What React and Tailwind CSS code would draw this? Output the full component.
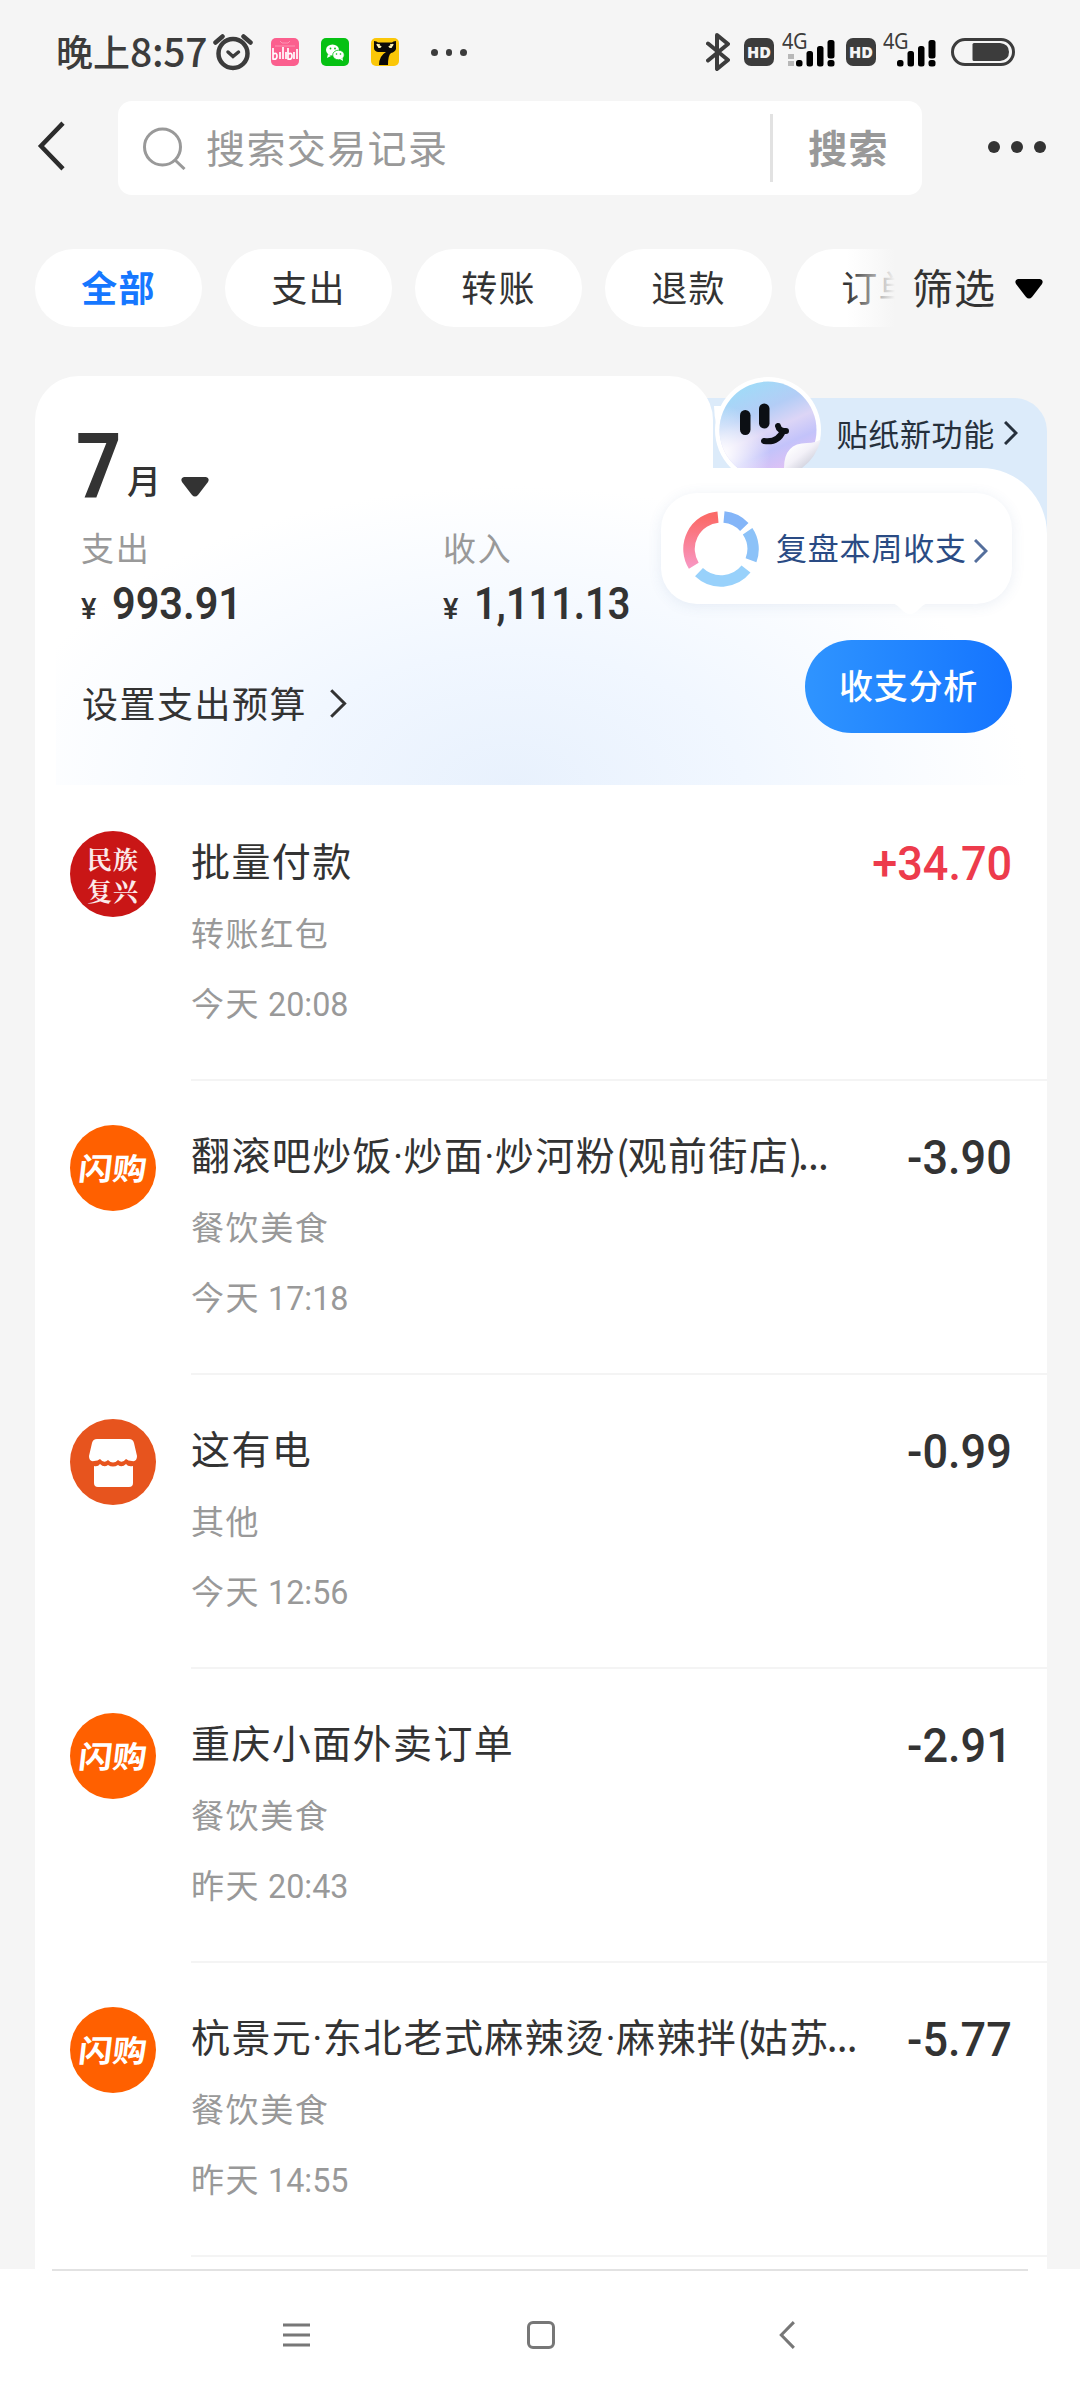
const CJK = "font-['Noto_Sans_CJK_SC',sans-serif]"

function Chevron({ className, flip, w = 2.5, color = 'currentColor' }) {
  return (
    <svg className={className} viewBox="0 0 14 24" preserveAspectRatio="none" fill="none" stroke={color} strokeWidth={w}>
      <path d={flip ? 'M13 1 2 12 13 23' : 'M1 1 12 12 1 23'} vectorEffect="non-scaling-stroke" />
    </svg>
  )
}

function Caret({ className }) {
  return (
    <svg className={className} viewBox="0 0 28 20" fill="currentColor">
      <path d="M3 0h22q4 1 2 5L17 18q-3 3-6 0L1 5Q-1 1 3 0Z" />
    </svg>
  )
}

// Condensed numerals: Roboto squeezed horizontally
function Num({ children, className = '' }) {
  return <span className={`inline-block origin-left font-['Roboto',sans-serif] ${className}`}>{children}</span>
}

function HdBadge() {
  return (
    <span className="flex h-7 w-[30px] items-center justify-center rounded-[7px] bg-[#3c3c3c] font-['Open_Sans',sans-serif] text-[16px] font-extrabold leading-none text-[#f5f5f5]">
      HD
    </span>
  )
}

function Signal({ dual }) {
  return (
    <div className="relative h-10 w-[54px]">
      <span className="absolute left-0 top-[-6px] origin-left scale-x-[0.95] font-['Noto_Sans',sans-serif] text-[21px] leading-[30px] tracking-[-0.5px]">
        4G
      </span>
      <svg className="h-10 w-[54px]" viewBox="0 0 54 40">
        {dual && <path d="M6 22h6v5H6zM6 29h6v5H6z" fill="#b8b8b8" />}
        <g fill="#000">
          <rect x="14" y="28" width="6.5" height="6.5" rx="2.5" />
          <rect x="24.5" y="19" width="6.5" height="15.5" rx="2.5" />
          <rect x="35" y="14" width="6.5" height="20.5" rx="2.5" />
          <rect x="45.5" y="8" width="7" height="18.5" rx="2.5" />
          <rect x="45.5" y="28" width="7" height="6.5" rx="2.5" />
        </g>
      </svg>
    </div>
  )
}

function StatusBar() {
  return (
    <div className="flex h-[101px] items-start pt-8 text-[#3c3c3c]">
      <div className={`ml-14 h-10 w-[157px] whitespace-nowrap text-[37px] font-medium leading-[37px] ${CJK}`}>
        晚上<span className="text-[39px] tracking-[-0.3px]">8:57</span>
      </div>
      <svg className="h-10 w-10" viewBox="0 0 40 40" fill="none" stroke="#3c3c3c" strokeLinecap="round">
        <circle cx="20" cy="21.5" r="14.5" strokeWidth="4.5" />
        <path d="M2.5 10.5 9.5 4.5M37.5 10.5 30.5 4.5" strokeWidth="4.5" />
        <path d="m15 20 5 4.5 5.5-4.5" strokeWidth="3.5" />
      </svg>
      <svg className="ml-[18px] mt-1.5 size-7" viewBox="0 0 28 28">
        <rect width="28" height="28" rx="5" fill="#fb5f8e" />
        <path d="m9 3 2 2h6l2-2M4 8h20" stroke="#fd94b3" fill="none" />
        <path d="M2 10v11q4 1 4-3t-4-2M9 14v7M12 9v12M15 14v7M17 10v11q4 1 4-3t-4-2M23 14v7M26 11v10" fill="none" stroke="#fff" strokeWidth="1.7" />
      </svg>
      <svg className="ml-[22px] mt-1.5 size-7" viewBox="0 0 28 28">
        <rect width="28" height="28" rx="5" fill="#06c113" />
        <ellipse cx="11.5" cy="12" rx="6.5" ry="5.5" fill="#fff" />
        <path d="m7 16-1 4 4-2z" fill="#fff" />
        <ellipse cx="17.5" cy="17" rx="5.8" ry="4.8" fill="#fff" stroke="#06c113" strokeWidth=".8" />
        <path d="m19 21 3 2-.5-3z" fill="#fff" />
        <g fill="#06c113">
          <circle cx="9.5" cy="10.5" r=".9" />
          <circle cx="14" cy="10.5" r=".9" />
          <circle cx="15.5" cy="16" r=".8" />
          <circle cx="19.5" cy="16" r=".8" />
        </g>
      </svg>
      <svg className="ml-[22px] mt-1.5 size-7" viewBox="0 0 28 28">
        <rect width="28" height="28" rx="5" fill="#fbc708" />
        <path d="M3 3q3 0 4 1.5h14Q22 3 25 3v8q-1 3-5 4-3 2-3 12H8q0-9 7-13H7q-4-1-4-4Z" fill="#0c0a08" />
        <path d="M6 6q2 5 4 2M18 8q2 3 4-2M8 6v4M20 6v4" fill="none" stroke="#fff3b0" strokeWidth="1.6" />
      </svg>
      <div className="ml-8 mt-[17px] flex gap-2">
        <i className="size-[6.5px] rounded-full bg-[#3c3c3c]" />
        <i className="size-[6.5px] rounded-full bg-[#3c3c3c]" />
        <i className="size-[6.5px] rounded-full bg-[#3c3c3c]" />
      </div>
      <div className="ml-auto mr-[65px] flex items-start">
        <svg className="mr-[14px] h-10 w-6" viewBox="0 0 24 40" fill="none" stroke="#3c3c3c" strokeWidth="4" strokeLinejoin="round" strokeLinecap="round">
          <path d="M2 11.5 22 28 11 37V3l11 9L2 28.5" />
        </svg>
        <div className="pt-1.5">
          <HdBadge />
        </div>
        <div className="ml-2 w-[64px]">
          <Signal dual />
        </div>
        <div className="pt-1.5">
          <HdBadge />
        </div>
        <div className="ml-[7px] w-[68px]">
          <Signal />
        </div>
        <svg className="mt-1.5 h-7 w-16" viewBox="0 0 64 28">
          <rect x="1.5" y="1.5" width="61" height="25" rx="12.5" fill="none" stroke="#3c3c3c" strokeWidth="3" />
          <path d="M23 5h26q9 1 9 9t-9 9H23q-1.5 0-1.5-1.5v-15Q21.500 5 23 5Z" fill="#3c3c3c" />
        </svg>
      </div>
    </div>
  )
}

function SearchHeader() {
  return (
    <div className="flex h-[94px] items-center">
      <Chevron flip className="mb-[5px] ml-[37px] h-[50px] w-7" w={4.5} color="#2c2c2c" />
      <div className="ml-[53px] flex h-[94px] w-[804px] items-center rounded-[14px] bg-white">
        <svg className="ml-[25px] h-[43px] w-[43px]" viewBox="0 0 43 43" fill="none" stroke="#999" strokeWidth="3">
          <circle cx="19.5" cy="20" r="18" />
          <path d="m32 33 9.5 9" />
        </svg>
        <span className="mb-[3px] ml-5 text-[39px] tracking-[1.4px] text-[#999]">搜索交易记录</span>
        <i className="ml-auto h-[68px] w-[3px] bg-[#e2e2e2]" />
        <span className="mb-[3px] ml-[35px] mr-[33px] text-[39px] font-bold tracking-[1.4px] text-[#999]">搜索</span>
      </div>
      <div className="mb-[3px] ml-[66px] flex gap-[11px]">
        <i className="size-3 rounded-full bg-[#333]" />
        <i className="size-3 rounded-full bg-[#333]" />
        <i className="size-3 rounded-full bg-[#333]" />
      </div>
    </div>
  )
}

const filters = ['全部', '支出', '转账', '退款', '订单']

function FilterTabs() {
  return (
    <div className="mt-[54px] flex h-[78px] items-center pl-[35px]">
      {/* the last chip scrolls out under the fade */}
      <div className="relative flex h-full w-[860px] gap-[23px] overflow-hidden">
        {filters.map((f, i) => (
          <button
            key={f}
            type="button"
            className={`h-full w-[167px] shrink-0 rounded-full bg-white pb-[5px] text-[36px] tracking-[1.3px] ${
              i === 0 ? 'font-bold text-[#1677ff]' : 'text-[#333]'
            }`}
          >
            {f}
          </button>
        ))}
        <span className="absolute inset-y-0 right-0 w-[48px] bg-linear-to-r from-transparent to-[#f5f5f5]" />
      </div>
      <span className="mb-[3px] ml-[17px] whitespace-nowrap text-[41px] tracking-[1px] text-[#333]">筛选</span>
      <Caret className="ml-[19px] mt-0.5 h-5 w-7 text-black" />
    </div>
  )
}

function Sticker() {
  return (
    <svg className="absolute left-[679px] top-0 h-[92px] w-[110px]" viewBox="0 0 110 92">
      <defs>
        <linearGradient id="holo" x1=".3" y1="0" x2=".75" y2="1">
          <stop offset="0" stopColor="#9fdcf8" />
          <stop offset=".3" stopColor="#b3cdf6" />
          <stop offset=".5" stopColor="#dcd5f6" />
          <stop offset=".68" stopColor="#c3c3fa" />
          <stop offset="1" stopColor="#eec0f2" />
        </linearGradient>
        <radialGradient id="glow" cx=".02" cy=".75" r=".5">
          <stop offset="0" stopColor="#fff" />
          <stop offset="1" stopColor="#fff" stopOpacity="0" />
        </radialGradient>
        <linearGradient id="curl" x1=".2" y1=".2" x2=".8" y2=".8">
          <stop offset="0" stopColor="#fff" />
          <stop offset=".5" stopColor="#f3f1f8" />
          <stop offset="1" stopColor="#cfd0dc" />
        </linearGradient>
      </defs>
      <path d="M0 30q1 40 30 62h25l30-20V30Z" fill="#fff" />
      <circle cx="54" cy="54" r="53" fill="#fff" />
      <circle cx="54" cy="54" r="48.5" fill="url(#holo)" />
      <circle cx="54" cy="54" r="48.5" fill="url(#glow)" />
      <path d="M70 92q0-25 23-25 9 0 14-4-2 17-17 29Z" fill="url(#curl)" />
      <path d="M107 63q3 0 3 2v27H88q14-10 19-29Z" fill="#dcebfa" />
      <rect x="26" y="34" width="10.5" height="25" rx="5.2" fill="#0c0f14" />
      <rect x="45" y="27.5" width="10.5" height="25" rx="5.2" fill="#0c0f14" />
      <path d="M50 65q14 2 19-10M64 50q1 5 8 5" fill="none" stroke="#0c0f14" strokeWidth="6" strokeLinecap="round" />
    </svg>
  )
}

function Donut() {
  return (
    <svg className="h-[76px] w-[76px]" viewBox="-38 -38 76 76" fill="none" strokeWidth="11.5">
      <defs>
        <linearGradient id="red" x1="0" y1="0" x2="0" y2="1">
          <stop offset="0" stopColor="#fb6a68" />
          <stop offset="1" stopColor="#f896c0" />
        </linearGradient>
      </defs>
      <path d="M-3-31.900A32 32 0 0 0-27.200 16.800" stroke="url(#red)" />
      <path d="M3-31.900A32 32 0 0 1 23.300-22" stroke="#84b5f8" />
      <path d="M26.600-17.800A32 32 0 0 1 30 11.300" stroke="#8cc2f8" />
      <path d="M-22 23.200A32 32 0 0 0 25 20" stroke="#98d1fb" />
    </svg>
  )
}

function Stat({ label, children, className }) {
  return (
    <div className={className}>
      <div className="text-[33px] leading-[38px] tracking-[1.8px] text-[#999]">{label}</div>
      <div className="mt-[14px] flex items-baseline leading-[48px] text-[#333]">
        <Num className="w-[31px] text-[29px] font-medium">¥</Num>
        {children}
      </div>
    </div>
  )
}

function Summary() {
  return (
    <section className="relative h-[411px]">
      {/* promo tab sits behind the white panel */}
      <div className="absolute right-0 top-[22px] h-[150px] w-[360px] rounded-tr-[33px] bg-[#dcebfa]" />
      <div className="absolute left-0 top-0 h-[93px] w-[678px] rounded-t-[44px] bg-white" />
      <div className="absolute bottom-0 left-0 top-[92px] w-full rounded-tr-[66px] bg-white" />
      <Sticker />
      <div className="absolute bottom-[2px] left-[21px] right-0 top-[110px] bg-[radial-gradient(ellipse_52%_100%_at_46%_100%,#e8f1fd_0%,#f1f7ff_45%,rgba(255,255,255,0)_100%)]" />

      <div className="relative flex justify-between">
        <div className="flex h-[126px] items-end pl-[41px] text-[#333]">
          <Num className="mb-[-3px] w-[50px] scale-x-[0.88] text-[90px] font-bold leading-[75px]">7</Num>
          <span className="ml-px text-[34px] font-medium leading-[44px]">月</span>
          <Caret className="mb-[5px] ml-5 h-5 w-7" />
        </div>
        <div className="mt-[33px] flex h-12 items-center pr-[29px] text-[#26303c]">
          <span className="text-[31px] tracking-[0.7px]">贴纸新功能</span>
          <Chevron className="ml-[9px] h-6 w-[14px]" w={3} />
        </div>
      </div>

      <div className="relative mt-[26px] flex pl-[46px]">
        <Stat label="支出" className="w-[362px]">
          <Num className="scale-x-[0.92] text-[45px] font-semibold">993.91</Num>
        </Stat>
        <Stat label="收入">
          <Num className="scale-x-[0.88] text-[45px] font-semibold">1,111.13</Num>
        </Stat>
      </div>
      <div className="relative mt-[45px] flex items-center pl-[47px] text-[#333]">
        <span className="text-[36px] leading-[48px] tracking-[1.5px]">设置支出预算</span>
        <Chevron className="ml-[23px] mt-0.5 h-[29px] w-[17px]" w={3} />
      </div>

      <div className="absolute right-[35px] top-[117px] flex h-[111px] w-[351px] items-center rounded-[36px] bg-white pl-[22px] text-[#2a4b84] shadow-[0_2px_14px_rgba(60,100,160,0.1)]">
        <Donut />
        <span className="mb-0.5 ml-[17px] whitespace-nowrap text-[31px] tracking-[0.8px]">复盘本周收支</span>
        <Chevron className="ml-[7px] mt-1 h-6 w-[14px] opacity-80" w={3} />
        <svg className="absolute bottom-[-11px] left-[231px] h-3 w-9" viewBox="0 0 36 12" fill="#fff">
          <path d="M0 0h36q-4 1-8 5-10 12-20 0-4-4-8-5Z" />
        </svg>
      </div>
      <button
        type="button"
        className="absolute right-[35px] top-[264px] h-[93px] w-[207px] rounded-full bg-linear-to-r from-[#2f94ff] to-[#1574ff] pb-[5px] text-[34px] font-medium tracking-[0.7px] text-white"
      >
        收支分析
      </button>
    </section>
  )
}

function Avatar({ kind }) {
  if (kind === 'red') {
    return (
      <div className="flex size-[86px] items-center justify-center rounded-full bg-[#c91616] pb-px font-['Noto_Serif_CJK_SC','Noto_Sans_CJK_SC',serif] text-[25px] font-bold leading-[32px] tracking-[1px] text-[#fbeaea]">
        <span className="w-[54px] text-center">民族复兴</span>
      </div>
    )
  }
  if (kind === 'shop') {
    return (
      <svg className="size-[86px]" viewBox="0 0 86 86">
        <circle cx="43" cy="43" r="43" fill="#e7541e" />
        <path
          d="M27 20h32q4 0 5 4l3 13q0 6-5 5-4 0-6-2-4 5-8 1-5 5-10 0-4 4-8-1-2 2-6 2-5 1-5-5l3-13q1-4 5-4Z"
          fill="#fff"
        />
        <path d="M24 47q4 1 6-2 4 4 8 1 5 3 10 0 4 3 8-1 2 3 7 2v17q0 4-4 4H28q-4 0-4-4Z" fill="#fff" />
      </svg>
    )
  }
  return (
    <div className="flex size-[86px] items-center justify-center rounded-full bg-[#ff6000] pb-0.5">
      <span className="-skew-x-6 scale-y-90 whitespace-nowrap text-[34px] font-bold leading-[40px] text-white">闪购</span>
    </div>
  )
}

const records = [
  { icon: 'red', title: '批量付款', type: '转账红包', day: '今天', time: '20:08', amount: '+34.70' },
  { icon: 'sg', title: '翻滚吧炒饭·炒面·炒河粉(观前街店)...', type: '餐饮美食', day: '今天', time: '17:18', amount: '-3.90' },
  { icon: 'shop', title: '这有电', type: '其他', day: '今天', time: '12:56', amount: '-0.99' },
  { icon: 'sg', title: '重庆小面外卖订单', type: '餐饮美食', day: '昨天', time: '20:43', amount: '-2.91' },
  { icon: 'sg', title: '杭景元·东北老式麻辣烫·麻辣拌(姑苏...', type: '餐饮美食', day: '昨天', time: '14:55', amount: '-5.77' },
]

// The CJK font draws the middle dot full width, so dots get a narrow face of their own
function Title({ text }) {
  return text.split(/(·|\.\.\.|[()])/).map((part, i) => {
    if (part === '·') {
      return (
        <span key={i} className="inline-block w-[10.5px] font-['Roboto',sans-serif] leading-none tracking-normal">
          ·
        </span>
      )
    }
    if (part === '...') {
      return (
        <span key={i} className="ml-[-3px] tracking-[-0.8px]">
          ...
        </span>
      )
    }
    if (part === '(' || part === ')') {
      return (
        <span key={i} className="tracking-[-1.5px]">
          {part}
        </span>
      )
    }
    return part
  })
}

function RecordRow({ record }) {
  const income = record.amount.startsWith('+')
  return (
    <li className="flex h-[294px] pl-[35px]">
      <div className="mt-[44px] w-[121px] shrink-0">
        <Avatar kind={record.icon} />
      </div>
      <div className="flex flex-1 justify-between border-b-2 border-[#f4f4f4] pr-[35px] pt-[48px]">
        <div className="whitespace-nowrap">
          <div className="h-12 text-[39px] leading-[48px] tracking-[1.4px] text-[#333]">
            <Title text={record.title} />
          </div>
          <div className="mt-[27px] text-[33px] leading-[44px] tracking-[1.6px] text-[#999]">{record.type}</div>
          <div className="mt-[26px] flex items-baseline text-[33px] leading-[44px] tracking-[1.6px] text-[#999]">
            {record.day}
            <Num className="ml-[8px] scale-x-[0.95] text-[34px] tracking-normal">{record.time}</Num>
          </div>
        </div>
        <Num
          className={`mt-0.5 h-[54px] origin-right! scale-x-[0.92] text-[49px] font-medium leading-[54px] ${
            income ? 'text-[#ed3b4c]' : 'text-[#333]'
          }`}
        >
          {record.amount}
        </Num>
      </div>
    </li>
  )
}

function NavBar() {
  return (
    <nav className="flex h-[131px] flex-col items-center bg-white">
      <i className="h-0.5 w-[976px] bg-[#e2e2e2]" />
      <div className="flex w-full flex-1 items-center pb-0.5 text-[#777]">
        <svg className="ml-[283px] h-6 w-7" viewBox="0 0 28 24" stroke="#777" strokeWidth="3">
          <path d="M0 2h27M0 12h27M0 22h27" />
        </svg>
        <i className="ml-[216px] size-7 rounded-[6px] border-3 border-[#777]" />
        <Chevron flip className="ml-[224px] h-7 w-4" w={3} />
      </div>
    </nav>
  )
}

export default function App() {
  return (
    <div className={`flex h-[2400px] w-[1080px] flex-col overflow-hidden bg-[#f5f5f5] ${CJK}`}>
      <StatusBar />
      <SearchHeader />
      <FilterTabs />
      <main className="ml-[35px] mt-[49px] h-[1893px] w-[1012px] shrink-0 overflow-hidden">
        <Summary />
        <ul className="h-[1482px] bg-white">
          {records.map((r) => (
            <RecordRow key={r.title} record={r} />
          ))}
        </ul>
      </main>
      <NavBar />
    </div>
  )
}
